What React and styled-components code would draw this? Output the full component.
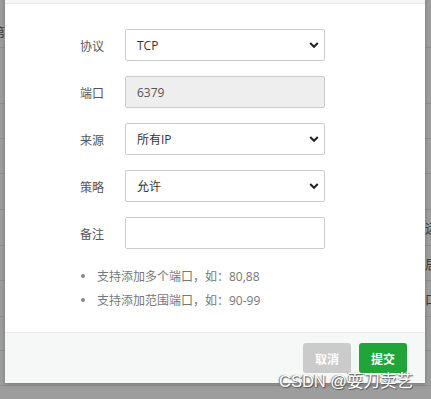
import React from "react";
import styled, { createGlobalStyle } from "styled-components";

const Global = createGlobalStyle`
  html, body { margin: 0; padding: 0; }
  body {
    width: 431px; height: 399px; overflow: hidden;
    font-family: "Open Sans", "Noto Sans CJK SC", sans-serif;
  }
`;

const Page = styled.div`
  position: relative;
  width: 431px;
  height: 399px;
  overflow: hidden;
  background: #a2a2a2;
`;

const Backdrop = styled.div`
  display: flex;
  flex-direction: column;
`;

const BgRow = styled.div`
  height: ${(p) => p.$h}px;
  box-sizing: border-box;
  padding-top: ${(p) => p.$pt || 0}px;
  border-bottom: 1px solid #8e8e8e;
  display: flex;
  align-items: center;
  justify-content: space-between;
  background: #9d9d9d;
  font-family: "Noto Sans CJK SC", sans-serif;
  font-size: 13px;
  color: #3c3c3c;
`;

const BgCell = styled.span`
  margin-left: ${(p) => p.$ml || 0}px;
  margin-right: ${(p) => p.$mr || 0}px;
`;

const Modal = styled.div`
  position: absolute;
  left: 5px;
  top: -38px;
  width: 420px;
  background: #fff;
  box-shadow: 0 1px 4px rgba(0, 0, 0, 0.25);
  display: flex;
  flex-direction: column;
`;

const Header = styled.div`
  height: 42px;
  box-sizing: border-box;
  background: #f6f6f6;
  border-bottom: 1px solid #e8e8e8;
  padding-left: 20px;
  font-size: 14px;
  line-height: 42px;
  color: #333;
`;

const Body = styled.div`
  padding: 25px 0 20px 75px;
  display: flex;
  flex-direction: column;
`;

const Form = styled.div`
  display: grid;
  grid-template-columns: 45px 200px;
  row-gap: 15px;
  align-items: center;
`;

const Label = styled.label`
  font-family: "Noto Sans CJK SC", sans-serif;
  font-size: 12px;
  color: #555;
`;

const Field = styled.div`
  position: relative;
  height: 32px;
  box-sizing: border-box;
  border: 1px solid #ccc;
  border-radius: 2px;
  background: ${(p) => (p.$disabled ? "#eee" : "#fff")};
  display: flex;
  align-items: center;
  padding-left: 11px;
  font-family: "Open Sans", "Noto Sans CJK SC", sans-serif;
  font-size: 12px;
  color: ${(p) => (p.$disabled ? "#555" : "#333")};
`;

const Chevron = styled.svg`
  position: absolute;
  right: 5px;
  top: 50%;
  margin-top: -4px;
  width: 10px;
  height: 8px;
`;

const Tips = styled.ul`
  list-style: none;
  margin: 15px 0 0 0;
  padding: 0;
  display: flex;
  flex-direction: column;
`;

const Tip = styled.li`
  display: flex;
  align-items: center;
  height: 24px;
  font-family: "Open Sans", "Noto Sans CJK SC", sans-serif;
  font-size: 12px;
  color: #777;
  &::before {
    content: "";
    width: 4px;
    height: 4px;
    border-radius: 50%;
    background: #888;
    margin-left: 1px;
    margin-right: 12px;
  }
`;

const Footer = styled.div`
  border-top: 1px solid #eceeee;
  background: #f6f7f7;
  padding: 10px 18px 10px 0;
  display: flex;
  justify-content: flex-end;
  gap: 8px;
`;

const Button = styled.button`
  width: 48px;
  height: 30px;
  border: none;
  border-radius: 3px;
  padding: 0;
  background: ${(p) => (p.$primary ? "#20a53a" : "#cbcbcb")};
  color: #fff;
  font-family: "Noto Sans CJK SC", sans-serif;
  font-size: 12px;
  font-weight: bold;
`;

const Watermark = styled.div`
  position: absolute;
  left: 279px;
  top: 368px;
  font-family: "Liberation Sans", "Noto Sans CJK SC", sans-serif;
  font-size: 16.5px;
  color: #fff;
  white-space: nowrap;
  text-shadow: 1px 1px 1px #555, -1px 0 1px #777;
`;

const ChevronIcon = () => (
  <Chevron viewBox="0 0 10 8">
    <path d="M1.2 2 L5 5.8 L8.8 2" fill="none" stroke="#222" strokeWidth="2" />
  </Chevron>
);

const rows = [
  { h: 48, l: "第", pt: 16 },
  { h: 56 },
  { h: 35 },
  { h: 35 },
  { h: 36 },
  { h: 36, r: "远" },
  { h: 35, r: "居" },
  { h: 36, r: "口" },
  { h: 34 },
  { h: 35 },
  { h: 35 },
];

export default function App() {
  return (
    <Page>
      <Global />
      <Backdrop>
        {rows.map((r, i) => (
          <BgRow key={i} $h={r.h} $pt={r.pt}>
            <BgCell $ml={-8}>{r.l || ""}</BgCell>
            <BgCell $mr={-7}>{r.r || ""}</BgCell>
          </BgRow>
        ))}
      </Backdrop>
      <Modal>
        <Header>添加端口规则</Header>
        <Body>
          <Form>
            <Label>协议</Label>
            <Field>
              TCP
              <ChevronIcon />
            </Field>
            <Label>端口</Label>
            <Field $disabled>6379</Field>
            <Label>来源</Label>
            <Field>
              所有IP
              <ChevronIcon />
            </Field>
            <Label>策略</Label>
            <Field>
              允许
              <ChevronIcon />
            </Field>
            <Label>备注</Label>
            <Field />
          </Form>
          <Tips>
            <Tip>支持添加多个端口，如：80,88</Tip>
            <Tip>支持添加范围端口，如：90-99</Tip>
          </Tips>
        </Body>
        <Footer>
          <Button>取消</Button>
          <Button $primary>提交</Button>
        </Footer>
      </Modal>
      <Watermark>CSDN @耍刀卖艺</Watermark>
    </Page>
  );
}
